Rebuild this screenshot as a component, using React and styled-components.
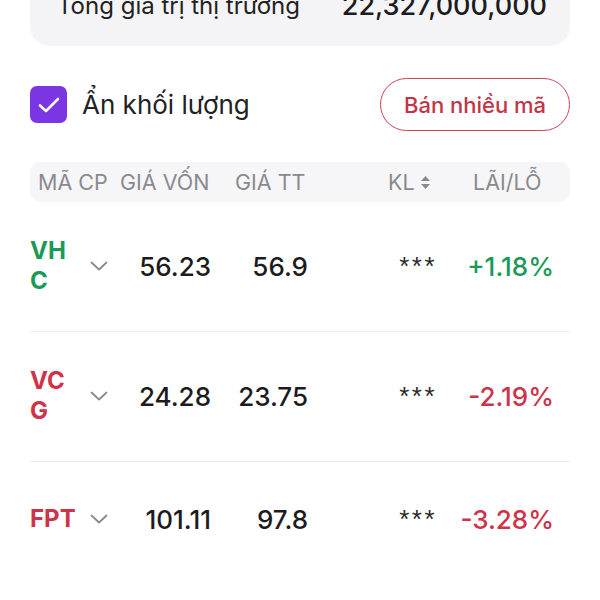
import styled, { createGlobalStyle } from "styled-components";

const GlobalStyle = createGlobalStyle`
  html, body {
    margin: 0;
    padding: 0;
    background: #ffffff;
    overflow: hidden;
  }

  body {
    font-family: Inter, "Noto Sans", sans-serif;
    color: #1c1c1e;
  }
`;

const Page = styled.div`
  width: 600px;
  height: 600px;
  padding: 0 30px;
  box-sizing: border-box;
  overflow: hidden;
`;

const SummaryCard = styled.div`
  margin-top: -39px;
  padding: 29px 23px 24px 27px;
  background: #f4f4f7;
  border-radius: 20px;

  display: flex;
  align-items: center;
  justify-content: space-between;
  line-height: 32px;
`;

const SummaryLabel = styled.span`
  font-size: 24px;
  color: #222;
`;

const SummaryValue = styled.span`
  font-size: 27px;
  font-weight: 500;
  color: #1c1c1e;
`;

const Toolbar = styled.div`
  margin-top: 32px;
  display: flex;
  align-items: center;
  justify-content: space-between;
`;

const CheckLabel = styled.label`
  display: flex;
  align-items: center;
  gap: 15px;
  font-size: 26px;
  color: #222;
`;

const CheckBox = styled.span`
  width: 37px;
  height: 37px;
  border-radius: 7px;
  background: #7b35e3;
  display: flex;
  align-items: center;
  justify-content: center;
`;

const OutlineButton = styled.button`
  width: 190px;
  height: 53px;
  border: 1.5px solid #c94656;
  border-radius: 27px;
  background: #fff;
  color: #c33446;
  font-family: inherit;
  font-size: 22px;
  font-weight: 500;
  padding: 0;
`;

const TableHead = styled.div`
  margin-top: 31px;
  height: 40px;
  padding-left: 8px;
  background: #f6f6f8;
  border-radius: 10px;

  display: grid;
  grid-template-columns: 82px 115px 153px 85px auto;
  align-items: center;
  font-size: 21.5px;
  color: #8a8a8e;
`;

const HeadCell = styled.span`
  display: flex;
  align-items: center;
  gap: 5px;
  white-space: nowrap;
`;

const Row = styled.div`
  display: grid;
  grid-template-columns: 50px 35px 96px 97px 132px auto;
  align-items: center;
  padding: 34px 16px 35px 0;
  border-bottom: ${({ $last }) => ($last ? "none" : "1px solid #ececee")};
`;

const Ticker = styled.span`
  min-height: 46px;
  display: flex;
  align-items: center;
  font-size: 24px;
  font-weight: 700;
  line-height: 30px;
  word-break: break-all;
  color: ${({ $up }) => ($up ? "#1b9a57" : "#cf3349")};
`;

const Chevron = styled.span`
  display: flex;
  justify-content: center;
  padding-left: 3px;
`;

const Num = styled.span`
  text-align: right;
  font-size: 26px;
  font-weight: 500;
  color: #1c1c1e;
`;

const Hidden = styled.span`
  text-align: right;
  padding-right: 3px;
  font-family: "Liberation Sans", Arial, sans-serif;
  font-size: 26px;
  font-weight: 400;
  color: #2a2a2a;
  letter-spacing: 2.5px;
`;

const Change = styled.span`
  text-align: right;
  font-size: 26px;
  font-weight: 500;
  color: ${({ $up }) => ($up ? "#1b9a57" : "#cf3349")};
`;

const rows = [
  { code: "VHC", cost: "56.23", price: "56.9", change: "+1.18%", up: true },
  { code: "VCG", cost: "24.28", price: "23.75", change: "-2.19%", up: false },
  { code: "FPT", cost: "101.11", price: "97.8", change: "-3.28%", up: false },
];

function CheckIcon() {
  return (
    <svg width="22" height="16" viewBox="0 0 22 16" fill="none">
      <path
        d="M2 8.5L8 14L20 2"
        stroke="#fff"
        strokeWidth="2.6"
        strokeLinecap="round"
        strokeLinejoin="round"
      />
    </svg>
  );
}

function SortIcon() {
  return (
    <svg width="11" height="15" viewBox="0 0 11 15">
      <path d="M5.5 1L10 6H1z" fill="#8a8a8e" />
      <path d="M5.5 14L10 9H1z" fill="#8a8a8e" />
    </svg>
  );
}

function ChevronIcon() {
  return (
    <svg width="18" height="10" viewBox="0 0 18 10" fill="none">
      <path
        d="M1.5 1.5L9 8.5L16.5 1.5"
        stroke="#8a8a8e"
        strokeWidth="1.8"
        strokeLinecap="round"
        strokeLinejoin="round"
      />
    </svg>
  );
}

export default function App() {
  return (
    <>
      <GlobalStyle />
      <Page>
        <SummaryCard>
          <SummaryLabel>Tổng giá trị thị trường</SummaryLabel>
          <SummaryValue>22,327,000,000</SummaryValue>
        </SummaryCard>

        <Toolbar>
          <CheckLabel>
            <CheckBox>
              <CheckIcon />
            </CheckBox>
            Ẩn khối lượng
          </CheckLabel>
          <OutlineButton>Bán nhiều mã</OutlineButton>
        </Toolbar>

        <TableHead>
          <HeadCell>MÃ CP</HeadCell>
          <HeadCell>GIÁ VỐN</HeadCell>
          <HeadCell>GIÁ TT</HeadCell>
          <HeadCell>
            KL <SortIcon />
          </HeadCell>
          <HeadCell>LÃI/LỖ</HeadCell>
        </TableHead>

        {rows.map((r, i) => (
          <Row key={r.code} $last={i === rows.length - 1}>
            <Ticker $up={r.up}>{r.code}</Ticker>
            <Chevron>
              <ChevronIcon />
            </Chevron>
            <Num>{r.cost}</Num>
            <Num>{r.price}</Num>
            <Hidden>***</Hidden>
            <Change $up={r.up}>{r.change}</Change>
          </Row>
        ))}
      </Page>
    </>
  );
}
